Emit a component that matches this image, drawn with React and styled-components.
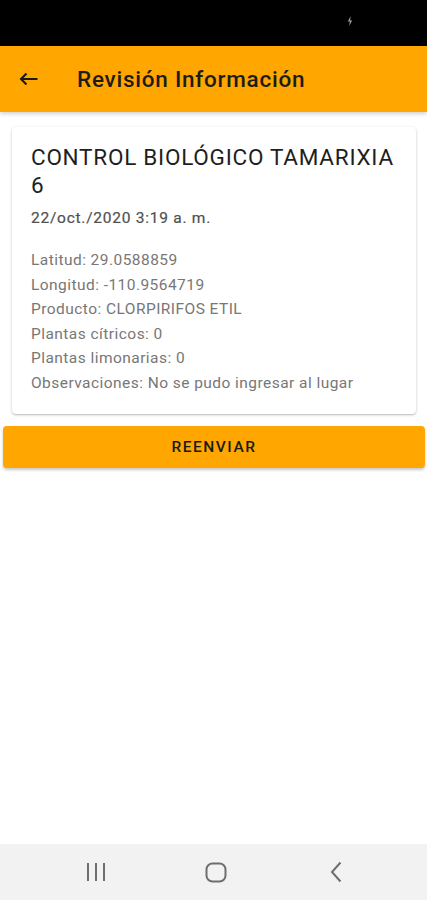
import React from 'react';
import styled, { createGlobalStyle } from 'styled-components';

const GlobalStyle = createGlobalStyle`
  html, body {
    margin: 0;
    padding: 0;
    background: #ffffff;
  }
  body {
    font-family: Roboto, "Noto Sans", Arial, sans-serif;
  }
`;

const Screen = styled.div`
  display: flex;
  flex-direction: column;
  height: 900px;
  overflow: hidden;
`;

const StatusBar = styled.div`
  height: 46px;
  background: #000;
  display: flex;
  justify-content: flex-end;
  align-items: center;
  padding-right: 74px;
  padding-bottom: 4px;
  box-sizing: border-box;
`;

const AppBar = styled.header`
  height: 66px;
  background: #ffa600;
  display: flex;
  align-items: center;
  box-shadow: 0 2px 4px rgba(0, 0, 0, 0.18);
  position: relative;
  z-index: 1;
`;

const BackButton = styled.div`
  width: 77px;
  display: flex;
  align-items: center;
  padding-left: 19px;
  box-sizing: border-box;
`;

const Title = styled.h1`
  margin: 0;
  font-size: 22.5px;
  font-weight: 500;
  color: #1c1c1c;
  letter-spacing: 0.75px;
`;

const Content = styled.main`
  flex: 1;
  display: flex;
  flex-direction: column;
  padding: 15px 0 0;
`;

const Card = styled.section`
  margin: 0 11px 0 12px;
  padding: 16px 8px 18px 19px;
  background: #fff;
  border-radius: 4px;
  box-shadow: 0 1px 3px rgba(0, 0, 0, 0.22), 0 1px 1px rgba(0, 0, 0, 0.08);
`;

const CardTitle = styled.h2`
  margin: 0;
  font-size: 22.5px;
  font-weight: 400;
  line-height: 28px;
  letter-spacing: 0.75px;
  color: #1e1e1e;
`;

const DateText = styled.div`
  margin-top: 8px;
  font-size: 15.5px;
  line-height: 22px;
  font-weight: 400;
  letter-spacing: 0.75px;
  color: #505050;
  -webkit-text-stroke: 0.2px #505050;
`;

const InfoList = styled.div`
  margin-top: 19px;
  display: flex;
  flex-direction: column;
`;

const InfoLine = styled.div`
  font-size: 15.5px;
  line-height: 24.6px;
  letter-spacing: 0.45px;
  color: #777;
`;

const ResendButton = styled.button`
  margin: 12px 2px 0 3px;
  height: 42px;
  border: none;
  border-radius: 4px;
  background: #ffa600;
  box-shadow: 0 2px 3px rgba(0, 0, 0, 0.22);
  font-family: inherit;
  font-size: 15.5px;
  font-weight: 500;
  letter-spacing: 1.5px;
  color: #1a1a1a;
`;

const NavBar = styled.nav`
  height: 56px;
  background: #f2f2f2;
  display: grid;
  grid-template-columns: repeat(3, 120px);
  align-items: center;
  justify-items: center;
  padding: 0 0 0 36px;
`;

const info = [
  'Latitud: 29.0588859',
  'Longitud: -110.9564719',
  'Producto: CLORPIRIFOS ETIL',
  'Plantas cítricos: 0',
  'Plantas limonarias: 0',
  'Observaciones: No se pudo ingresar al lugar',
];

export default function App() {
  return (
    <Screen>
      <GlobalStyle />
      <StatusBar>
        <svg width="6" height="10" viewBox="0 0 6 10">
          <path d="M3.6 0 L0.8 5.4 H2.8 L2.2 10 L5.2 4.4 H3.2 Z" fill="#9a9a9a" />
        </svg>
      </StatusBar>
      <AppBar>
        <BackButton>
          <svg width="20" height="14" viewBox="0 0 20 14">
            <path d="M2 7 H18.5 M7.5 1.5 L2 7 L7.5 12.5" fill="none" stroke="#1a1a1a" strokeWidth="2.1" />
          </svg>
        </BackButton>
        <Title>Revisión Información</Title>
      </AppBar>
      <Content>
        <Card>
          <CardTitle>CONTROL BIOLÓGICO TAMARIXIA 6</CardTitle>
          <DateText>22/oct./2020 3:19 a. m.</DateText>
          <InfoList>
            {info.map((line) => (
              <InfoLine key={line}>{line}</InfoLine>
            ))}
          </InfoList>
        </Card>
        <ResendButton>REENVIAR</ResendButton>
      </Content>
      <NavBar>
        <svg width="20" height="20" viewBox="0 0 20 20">
          <path d="M2 1v18M10 1v18M18 1v18" stroke="#6e6e6e" strokeWidth="2" />
        </svg>
        <svg width="22" height="21" viewBox="0 0 22 21">
          <rect x="1.5" y="1.5" width="19" height="18" rx="6" fill="none" stroke="#6e6e6e" strokeWidth="2" />
        </svg>
        <svg width="12" height="22" viewBox="0 0 12 22">
          <path d="M10.5 1.5 L2 11 L10.5 20.5" fill="none" stroke="#6e6e6e" strokeWidth="2" />
        </svg>
      </NavBar>
    </Screen>
  );
}
